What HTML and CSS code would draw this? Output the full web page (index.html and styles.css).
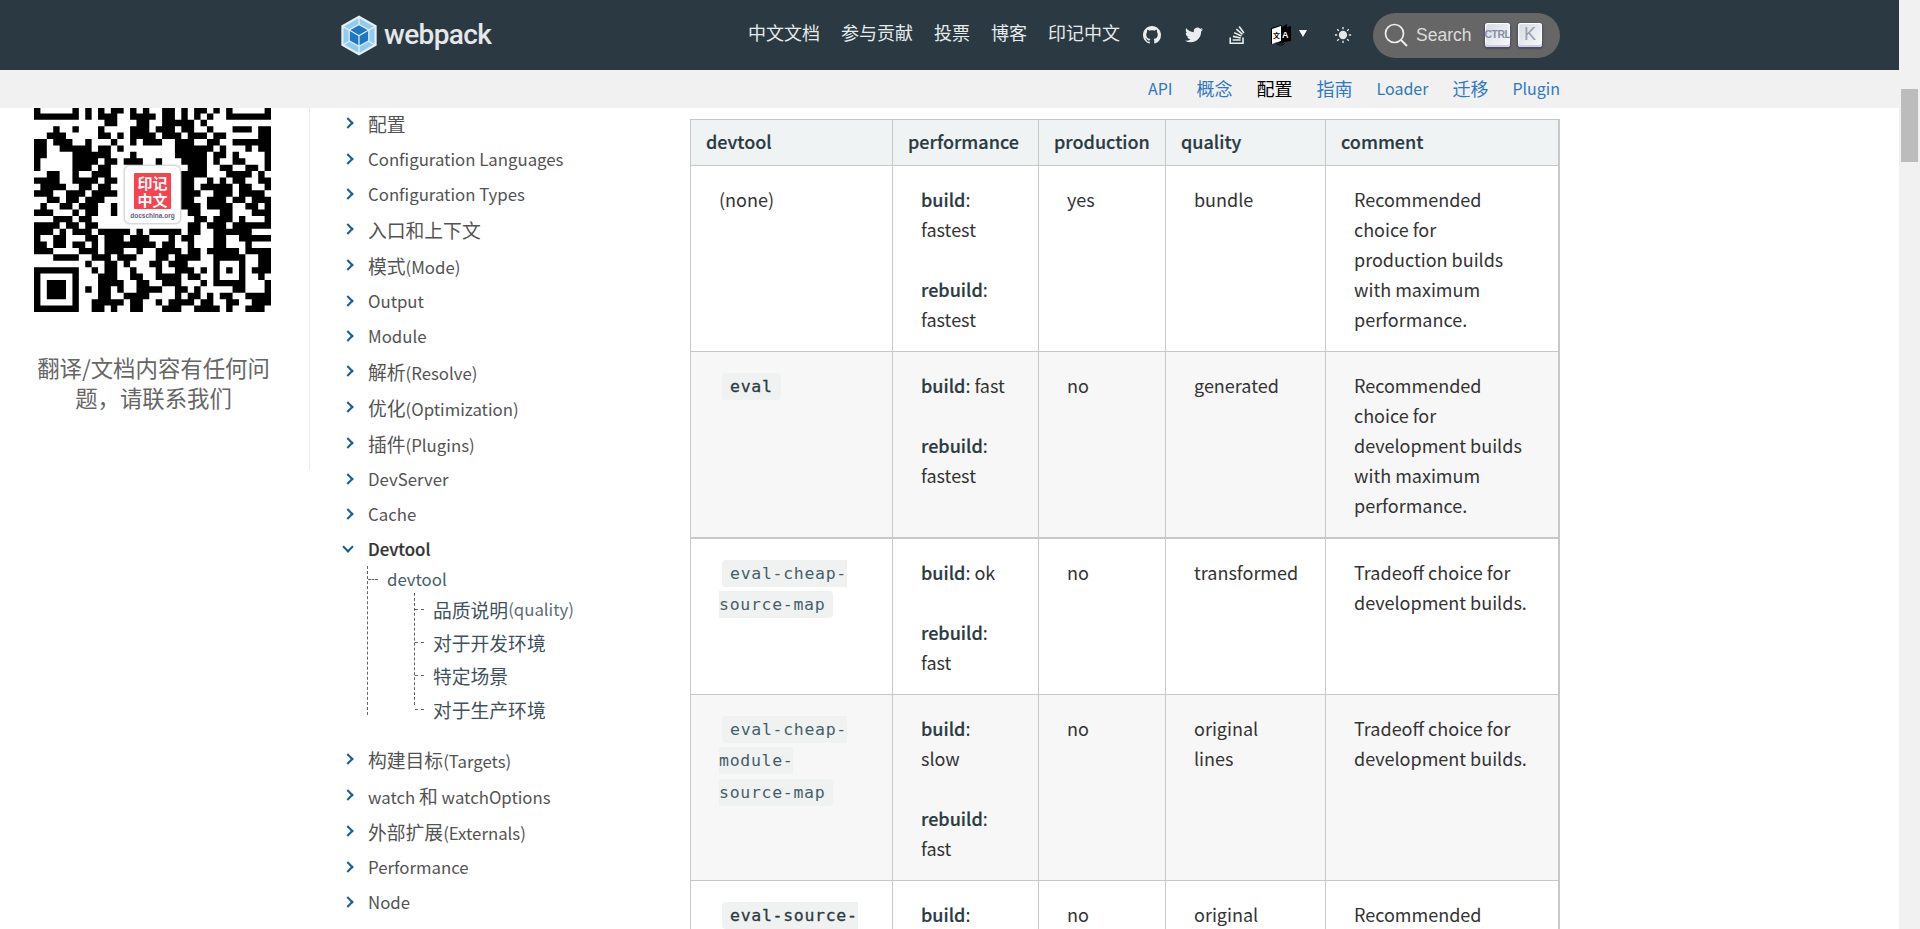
FILE: index.html
```html
<!DOCTYPE html>
<html lang="zh-CN">
<head>
<meta charset="utf-8">
<title>Devtool | webpack 中文文档</title>
<link rel="stylesheet" href="styles.css">
</head>
<body>
<div class="page">
  <header class="header">
    <a class="logo">
      <svg class="logo-mark" viewBox="0 0 600 600"><path fill="#e8eff3" d="M300 .1L565 150v299.9L300 599.8 35 449.9V150z"/><path fill="#8ecdf0" d="M517.7 439.5L308.8 557.8v-92L439 394.1l78.7 45.4zm14.3-12.9V179.4l-76.4 44.1v159l76.4 44.1zM81.5 439.5l208.9 118.2v-92l-130.2-71.6-78.7 45.4zm-14.3-12.9V179.4l76.4 44.1v159l-76.4 44.1zm8.9-263.2L290.4 42.2v89l-137.3 75.5-1.1.6-75.9-43.9zm446.9 0L308.8 42.2v89L446 206.8l1.1.6 75.9-44z"/><path fill="#1c78c0" d="M290.4 444.8L162 374.1V234.2l128.4 74.1v136.5zm18.4 0l128.4-70.6v-140l-128.4 74.1v136.5zM299.6 303zm-129-85l129-70.9L428.5 218l-128.9 74.4-129-74.4z"/></svg>
      <span class="logo-text">webpack</span>
    </a>
    <nav class="top-nav">
      <a>中文文档</a><a>参与贡献</a><a>投票</a><a>博客</a><a>印记中文</a>
    </nav>
    <div class="top-icons">
      <svg class="ico ico-gh" viewBox="0 0 16 16"><path d="M8 0C3.58 0 0 3.58 0 8c0 3.54 2.29 6.53 5.47 7.59.4.07.55-.17.55-.38 0-.19-.01-.82-.01-1.49-2.01.37-2.53-.49-2.69-.94-.09-.23-.48-.94-.82-1.13-.28-.15-.68-.52-.01-.53.63-.01 1.08.58 1.23.82.72 1.21 1.87.87 2.33.66.07-.52.28-.87.51-1.07-1.78-.2-3.64-.89-3.64-3.95 0-.87.31-1.59.82-2.15-.08-.2-.36-1.02.08-2.12 0 0 .67-.21 2.2.82.64-.18 1.32-.27 2-.27.68 0 1.36.09 2 .27 1.53-1.04 2.2-.82 2.2-.82.44 1.1.16 1.92.08 2.12.51.56.82 1.27.82 2.15 0 3.07-1.87 3.75-3.65 3.95.29.25.54.73.54 1.48 0 1.07-.01 1.93-.01 2.2 0 .21.15.46.55.38A8.013 8.013 0 0016 8c0-4.42-3.58-8-8-8z"/></svg>
      <svg class="ico ico-tw" viewBox="0 0 24 24"><path d="M23.953 4.57a10 10 0 01-2.825.775 4.958 4.958 0 002.163-2.723c-.951.555-2.005.959-3.127 1.184a4.92 4.92 0 00-8.384 4.482C7.69 8.095 4.067 6.13 1.64 3.162a4.822 4.822 0 00-.666 2.475c0 1.71.87 3.213 2.188 4.096a4.904 4.904 0 01-2.228-.616v.06a4.923 4.923 0 003.946 4.827 4.996 4.996 0 01-2.212.085 4.936 4.936 0 004.604 3.417 9.867 9.867 0 01-6.102 2.105c-.39 0-.779-.023-1.17-.067a13.995 13.995 0 007.557 2.209c9.053 0 13.998-7.496 13.998-13.985 0-.21 0-.42-.015-.63A9.935 9.935 0 0024 4.59z"/></svg>
      <svg class="ico ico-so" viewBox="0 0 24 24"><path d="M15.725 0l-1.72 1.277 6.39 8.588 1.716-1.277L15.725 0zm-3.94 3.418l-1.369 1.644 8.225 6.85 1.369-1.644-8.225-6.85zm-3.15 4.465l-.905 1.94 9.702 4.517.904-1.94-9.701-4.517zm-1.85 4.86l-.44 2.093 10.473 2.201.44-2.092-10.473-2.203zM1.89 15.47V24h19.19v-8.53h-2.133v6.397H4.021v-6.396H1.89zm4.265 2.133v2.13h10.66v-2.13H6.154z"/></svg>
      <div class="lang">
        <svg class="ico-lang" viewBox="0 0 20 22"><path fill="#000" d="M0 4l10-3 1 2 5-3v3l4-1v15l-7 1c-1 2-5 2-6 0l-7 2z"/><path fill="#fff" d="M1 5l9-3v15l-9 3z"/><path fill="none" stroke="#000" stroke-width="1" d="M5 18.500c2 3.500 7 3.500 9 .5"/><text class="lang-a" x="11" y="14">A</text><text class="lang-zh" x="2" y="14">文</text></svg>
        <span class="caret"></span>
      </div>
      <svg class="ico-sun" viewBox="0 0 20 20"><circle cx="10" cy="10" r="4.600" fill="#e4e8ea"/><path fill="none" stroke="#e4e8ea" stroke-width="1.500" d="M10 1v2.500M10 16.500V19M1 10h2.500M16.500 10H19M3.600 3.600l1.800 1.800M14.600 14.600l1.800 1.800M3.600 16.400l1.800-1.800M14.600 5.400l1.800-1.800"/></svg>
    </div>
    <div class="search">
      <svg class="search-ico" viewBox="0 0 24 24"><circle cx="10.500" cy="10.500" r="9" fill="none" stroke="#eee" stroke-width="1.700"/><path stroke="#eee" stroke-width="1.900" d="M17 17l6 6"/></svg>
      <span class="search-label">Search</span>
      <kbd class="key key-ctrl">CTRL</kbd>
      <kbd class="key key-k">K</kbd>
    </div>
  </header>

  <nav class="sub-nav">
    <a class="latin">API</a><a>概念</a><a class="active">配置</a><a>指南</a><a class="latin">Loader</a><a>迁移</a><a class="latin">Plugin</a>
  </nav>

  <main class="main">
    <aside class="promo">
      <div class="qr">
        <svg class="qr-code" viewBox="0 5.16 37 31.84" preserveAspectRatio="none"><path fill="none" stroke="#000" d="
M0 5.500h1M6 5.500h1M8 5.500h1M10 5.500h1M12 5.500h2M15 5.500h1M17 5.500h1M20 5.500h2M23 5.500h1M25 5.500h2M28 5.500h1M30 5.500h1M36 5.500h1
M0 6.500h7M8 6.500h1M10 6.500h3M15 6.500h4M20 6.500h2M23 6.500h1M25 6.500h1M27 6.500h1M30 6.500h7
M11 7.500h2M16 7.500h2M20 7.500h5M26 7.500h1
M3 8.500h1M6 8.500h1M10 8.500h1M15 8.500h3M19 8.500h3M23 8.500h2M27 8.500h1M31 8.500h3M35 8.500h2
M2 9.500h3M10 9.500h2M13 9.500h1M15 9.500h4M20 9.500h3M24 9.500h3M28 9.500h2M35 9.500h2
M0 10.500h2M3 10.500h3M8 10.500h1M12 10.500h1M15 10.500h1M17 10.500h3M22 10.500h3M27 10.500h2M31 10.500h4M35 10.500h2
M0 11.500h2M4 11.500h5M10 11.500h2M13 11.500h1M22 11.500h6M29 11.500h1M33 11.500h1M35 11.500h2
M0 12.500h2M6 12.500h6M15 12.500h1M22 12.500h5M28 12.500h2M31 12.500h1M36 12.500h1
M0 13.500h1M6 13.500h4M11 13.500h2M14 13.500h3M19 13.500h1M23 13.500h4M28 13.500h1M31 13.500h2M36 13.500h1
M0 14.500h1M6 14.500h3M10 14.500h2M24 14.500h3M29 14.500h2M33 14.500h2M36 14.500h1
M2 15.500h2M6 15.500h1M9 15.500h3M23 15.500h4M30 15.500h4M35 15.500h1
M0 16.500h4M6 16.500h4M11 16.500h2M23 16.500h2M27 16.500h1M29 16.500h1M31 16.500h2M35 16.500h2
M1 17.500h4M7 17.500h2M10 17.500h2M23 17.500h2M26 17.500h5M32 17.500h2M36 17.500h1
M0 18.500h3M5 18.500h3M9 18.500h4M23 18.500h3M28 18.500h3M32 18.500h4
M2 19.500h2M5 19.500h2M8 19.500h3M23 19.500h2M27 19.500h3M31 19.500h2M34 19.500h3
M1 20.500h1M4 20.500h2M7 20.500h3M12 20.500h1M23 20.500h3M27 20.500h4M33 20.500h2M36 20.500h1
M0 21.500h3M6 21.500h1M8 21.500h2M12 21.500h1M24 21.500h2M29 21.500h2M34 21.500h3
M3 22.500h3M7 22.500h2M25 22.500h2M28 22.500h3M32 22.500h1M36 22.500h1
M0 23.500h4M5 23.500h2M8 23.500h2M24 23.500h2M27 23.500h3M31 23.500h6
M0 24.500h3M4 24.500h1M6 24.500h3M10 24.500h5M16 24.500h1M18 24.500h5M24 24.500h2M28 24.500h6
M0 25.500h1M3 25.500h2M8 25.500h2M11 25.500h3M15 25.500h3M21 25.500h1M23 25.500h2M28 25.500h2M32 25.500h5
M0 26.500h2M3 26.500h2M6 26.500h2M9 26.500h1M11 26.500h8M20 26.500h2M24 26.500h1M28 26.500h2M33 26.500h1
M0 27.500h3M7 27.500h3M11 27.500h3M16 27.500h1M19 27.500h4M24 27.500h2M27 27.500h5M33 27.500h4
M3 28.500h4M9 28.500h3M13 28.500h3M19 28.500h2M22 28.500h4M28 28.500h5M35 28.500h2
M8 29.500h1M11 29.500h2M14 29.500h1M18 29.500h2M21 29.500h3M28 29.500h1M32 29.500h1M35 29.500h2
M0 30.500h7M9 30.500h1M11 30.500h2M15 30.500h1M19 30.500h1M22 30.500h3M26 30.500h1M28 30.500h1M30 30.500h1M32 30.500h1M34 30.500h3
M0 31.500h1M6 31.500h1M10 31.500h3M15 31.500h2M19 31.500h4M24 31.500h2M28 31.500h1M32 31.500h1M35 31.500h1
M0 32.500h1M2 32.500h3M6 32.500h1M10 32.500h4M16 32.500h2M20 32.500h3M26 32.500h1M28 32.500h5M36 32.500h1
M0 33.500h1M2 33.500h3M6 33.500h1M8 33.500h1M10 33.500h2M13 33.500h1M16 33.500h4M22 33.500h2M25 33.500h1M31 33.500h2M36 33.500h1
M0 34.500h1M2 34.500h3M6 34.500h1M10 34.500h2M14 34.500h4M22 34.500h1M24 34.500h2M27 34.500h1M29 34.500h2M33 34.500h4
M0 35.500h1M6 35.500h1M9 35.500h5M15 35.500h2M19 35.500h1M21 35.500h4M26 35.500h2M30 35.500h2M34 35.500h3
M0 36.500h7M9 36.500h2M12 36.500h1M15 36.500h2M20 36.500h3M25 36.500h4M30 36.500h1M33 36.500h3
"/></svg>
        <div class="qr-logo">
          <div class="qr-stamp">印记<br>中文</div>
          <div class="qr-domain">docschina.org</div>
        </div>
      </div>
      <p class="promo-text">翻译/文档内容有任何问题，请联系我们</p>
    </aside>

    <nav class="tree-nav">
      <a class="item cjk"><i class="chev"></i><span>配置</span></a>
      <a class="item"><i class="chev"></i><span>Configuration Languages</span></a>
      <a class="item"><i class="chev"></i><span>Configuration Types</span></a>
      <a class="item cjk"><i class="chev"></i><span>入口和上下文</span></a>
      <a class="item cjk"><i class="chev"></i><span>模式<small>(Mode)</small></span></a>
      <a class="item"><i class="chev"></i><span>Output</span></a>
      <a class="item"><i class="chev"></i><span>Module</span></a>
      <a class="item cjk"><i class="chev"></i><span>解析<small>(Resolve)</small></span></a>
      <a class="item cjk"><i class="chev"></i><span>优化<small>(Optimization)</small></span></a>
      <a class="item cjk"><i class="chev"></i><span>插件<small>(Plugins)</small></span></a>
      <a class="item"><i class="chev"></i><span>DevServer</span></a>
      <a class="item"><i class="chev"></i><span>Cache</span></a>
      <a class="item open"><i class="chev"></i><span>Devtool</span></a>
      <div class="tree">
        <a class="leaf">devtool</a>
        <div class="subtree">
          <a class="subleaf">品质说明<small>(quality)</small></a>
          <a class="subleaf">对于开发环境</a>
          <a class="subleaf">特定场景</a>
          <a class="subleaf">对于生产环境</a>
        </div>
      </div>
      <a class="item cjk"><i class="chev"></i><span>构建目标<small>(Targets)</small></span></a>
      <a class="item cjk"><i class="chev"></i><span><small>watch </small>和<small> watchOptions</small></span></a>
      <a class="item cjk"><i class="chev"></i><span>外部扩展<small>(Externals)</small></span></a>
      <a class="item"><i class="chev"></i><span>Performance</span></a>
      <a class="item"><i class="chev"></i><span>Node</span></a>
    </nav>

    <section class="content">
      <table class="dt">
        <colgroup><col class="c1"><col class="c2"><col class="c3"><col class="c4"><col class="c5"></colgroup>
        <thead>
          <tr><th>devtool</th><th>performance</th><th>production</th><th>quality</th><th>comment</th></tr>
        </thead>
        <tbody>
          <tr>
            <td>(none)</td>
            <td><p><b>build</b>:<br>fastest</p><p><b>rebuild</b>:<br>fastest</p></td>
            <td>yes</td>
            <td>bundle</td>
            <td>Recommended choice for production builds with maximum performance.</td>
          </tr>
          <tr>
            <td><code class="strong">eval</code></td>
            <td><p><b>build</b>: fast</p><p><b>rebuild</b>:<br>fastest</p></td>
            <td>no</td>
            <td>generated</td>
            <td>Recommended choice for development builds with maximum performance.</td>
          </tr>
          <tr class="thick">
            <td><code>eval-cheap-source-map</code></td>
            <td><p><b>build</b>: ok</p><p><b>rebuild</b>:<br>fast</p></td>
            <td>no</td>
            <td>transformed</td>
            <td>Tradeoff choice for development builds.</td>
          </tr>
          <tr>
            <td><code>eval-cheap-module-source-map</code></td>
            <td><p><b>build</b>:<br>slow</p><p><b>rebuild</b>:<br>fast</p></td>
            <td>no</td>
            <td>original<br>lines</td>
            <td>Tradeoff choice for development builds.</td>
          </tr>
          <tr>
            <td><code class="strong">eval-source-map</code></td>
            <td><p><b>build</b>:<br>slowest</p><p><b>rebuild</b>:<br>ok</p></td>
            <td>no</td>
            <td>original</td>
            <td>Recommended choice for development builds with high quality SourceMaps.</td>
          </tr>
        </tbody>
      </table>
    </section>
  </main>
</div>
<div class="scrollbar"><div class="thumb"></div></div>
</body>
</html>
```

FILE: styles.css
```css
* { box-sizing: border-box; }
html, body { height: 100%; }
body {
  margin: 0;
  height: 929px;
  overflow: hidden;
  display: flex;
  background: #fff;
  color: #333;
  font-family: "Noto Sans CJK SC", sans-serif;
}
small { font-size: inherit; }

.page { width: 1899px; height: 929px; display: flex; flex-direction: column; overflow: hidden; }

/* scrollbar */
.scrollbar { width: 21px; background: #f1f1f1; padding: 89px 2px 0; }
.thumb { height: 73px; background: #bcbcbc; }

/* header */
.header {
  height: 70px;
  flex: none;
  background: #2b3a42;
  display: flex;
  align-items: center;
  padding: 0 339px;
  color: #e6ebee;
}
.logo { display: flex; align-items: center; gap: 5px; }
.logo-mark { width: 40px; height: 45px; display: block; }
.logo-text {
  font-family: Roboto, sans-serif;
  font-size: 28px;
  font-weight: 500;
  letter-spacing: -.600px;
  color: #e4e8ea;
  margin-top: -2px;
}
.top-nav { margin-left: auto; margin-bottom: 6px; display: flex; gap: 21px; font-size: 18px; line-height: 30px; }
.top-icons { display: flex; align-items: center; margin-left: 23px; }
.ico { width: 18px; height: 18px; fill: #e9edef; display: block; }
.ico-tw { margin-left: 24px; }
.ico-so { margin-left: 25px; }
.lang { display: flex; align-items: center; margin-left: 25px; }
.ico-lang { width: 20px; height: 22px; display: block; }
.lang-a { font: 700 9px "Liberation Sans", sans-serif; fill: #fff; }
.lang-zh { font: 700 7px "Noto Sans CJK SC", sans-serif; fill: #000; }
.caret {
  margin-left: 8px;
  margin-top: -4px;
  width: 0;
  height: 0;
  border-left: 4px solid transparent;
  border-right: 4px solid transparent;
  border-top: 7px solid #fff;
}
.ico-sun { width: 18px; height: 18px; margin-left: 27px; display: block; }
.search {
  width: 187px;
  height: 45px;
  margin-left: 21px;
  border-radius: 23px;
  background: #666;
  display: flex;
  align-items: center;
  padding-left: 11px;
}
.search-ico { width: 24px; height: 24px; display: block; }
.search-label {
  width: 56px;
  margin-left: 8px;
  font: 17.500px "Liberation Sans", sans-serif;
  color: #dcdcdc;
}
.key {
  display: flex;
  align-items: center;
  justify-content: center;
  height: 24px;
  border-radius: 3px;
  background: linear-gradient(-225deg, #d5dbe4, #f8f8f8);
  box-shadow: inset 0 -2px 0 0 #cdcde6, inset 0 0 1px 1px #fff, 0 1px 2px 1px rgba(30, 35, 90, .4);
  color: #969faf;
  font-family: "Liberation Sans", sans-serif;
  padding-bottom: 2px;
}
.key-ctrl { width: 25px; margin-left: 13px; font-family: "Liberation Sans Narrow", "Liberation Sans", sans-serif; font-size: 10.500px; font-weight: 700; color: #858fa3; letter-spacing: -.500px; }
.key-k { width: 24px; margin-left: 8px; font-size: 18px; }

/* sub navigation */
.sub-nav {
  height: 38px;
  flex: none;
  background: #f1f1f1;
  display: flex;
  justify-content: flex-end;
  align-items: center;
  gap: 24px;
  padding: 0 339px 3px 0;
  color: #2f78c4;
  font-size: 18px;
}
.sub-nav .latin { font-size: 16px; }
.sub-nav .active { color: #000; }

/* main */
.main { flex: 1; min-height: 0; display: flex; align-items: flex-start; overflow: hidden; }

.promo {
  width: 310px;
  height: 362px;
  flex: none;
  padding: 0 30px 0 34px;
  border-right: 1px solid #ececec;
}
.qr { position: relative; width: 237px; height: 204px; }
.qr-code { width: 237px; height: 204px; display: block; }
.qr-logo {
  position: absolute;
  left: 90px;
  top: 57px;
  width: 57px;
  height: 59px;
  background: #fff;
  border: 1px solid #d8d8e0;
  border-radius: 6px;
  box-shadow: 0 0 2px rgba(60, 60, 90, .35);
  display: flex;
  flex-direction: column;
  align-items: center;
  padding-top: 7px;
}
.qr-stamp {
  width: 37px;
  height: 36px;
  background: #f9434f;
  color: #fff;
  font-size: 15px;
  font-weight: 700;
  line-height: 17px;
  text-align: center;
  padding-top: 1px;
  border-radius: 1px;
}
.qr-domain { font: 700 6.500px "Liberation Sans", sans-serif; color: #5c6189; margin-top: 3px; white-space: nowrap; }
.promo-text {
  margin: 40px 0 0 -6px;
  font-size: 22.400px;
  line-height: 30px;
  font-weight: 400;
  color: #666;
  text-align: center;
}

/* tree nav */
.tree-nav {
  width: 380px;
  flex: none;
  margin-top: -3px;
  padding-left: 35px;
  display: flex;
  flex-direction: column;
  color: #535353;
}
.item { height: 35px; display: flex; align-items: center; flex: none; }
.item.cjk { height: 36px; }
.item span { font-size: 16.800px; line-height: 24px; white-space: nowrap; }
.item.cjk span { font-size: 18.800px; padding-top: 2px; }
.item small, .subleaf small { font-size: 16.800px; }
.chev {
  width: 8px;
  height: 8px;
  margin: 0 16px 0 -1px;
  border-top: 2px solid #175d96;
  border-right: 2px solid #175d96;
  transform: rotate(45deg);
  flex: none;
}
.item.open span { font-weight: 500; color: #333; -webkit-text-stroke: .2px #333; }
.item.open .chev { transform: rotate(135deg); margin-top: -4px; }

.tree {
  margin: 0 0 26px 22px;
  height: 149px;
  border-left: 1px dashed #666;
  color: #465e69;
}
.leaf { display: flex; align-items: center; height: 26px; font-size: 16.800px; }
.leaf::before { content: ""; width: 10px; border-top: 1px dashed #666; margin-right: 9px; }
.subtree {
  margin: 5px 0 0 46px;
  height: 112px;
  border-left: 1px dashed #666;
}
.subleaf { display: flex; align-items: center; height: 33.300px; font-size: 18.800px; white-space: nowrap; color: #3f525c; }
.subleaf small { color: #5d6c74; }
.subleaf:first-child { margin-top: -4.500px; }
.subleaf::before { content: ""; width: 9px; border-top: 1px dashed #666; margin-right: 9px; flex: none; }

/* content */
.content { width: 869px; flex: none; margin-top: 11px; }
.dt {
  width: 868px;
  table-layout: fixed;
  border-collapse: collapse;
  font-size: 18px;
  line-height: 30px;
  color: #333;
  border-right: 2px solid #c8c8c8;
}
.c1 { width: 202px; }
.c2 { width: 146px; }
.c3 { width: 127px; }
.c4 { width: 160px; }
.c5 { width: 233px; }
.dt th, .dt td { border: 1px solid #c8c8c8; vertical-align: top; }
.dt th {
  height: 46px;
  padding: 6px 15px;
  background: #f0f3f4;
  color: #2b3a42;
  text-align: left;
  font-weight: 500;
  -webkit-text-stroke: .2px #2b3a42;
}
.dt td { padding: 18px 28px 17px; }
.dt tbody tr:nth-child(even) td { background: #f7f7f7; }
.dt tr.thick td { border-top-width: 2px; }
.dt p { margin: 0 0 30px; }
.dt p:last-child { margin-bottom: 0; }
.dt b { font-weight: 500; color: #2b3a42; -webkit-text-stroke: .2px #2b3a42; }
code {
  margin-left: 3px;
  padding: 4px 8px;
  border-radius: 4px;
  background: #f0f2f2;
  color: #465e69;
  font-family: "DejaVu Sans Mono", monospace;
  font-size: 16.500px;
  line-height: 31px;
  vertical-align: 1.500px;
  letter-spacing: .700px;
}
code.strong { color: #2b3a42; -webkit-text-stroke: .3px #2b3a42; }
```
